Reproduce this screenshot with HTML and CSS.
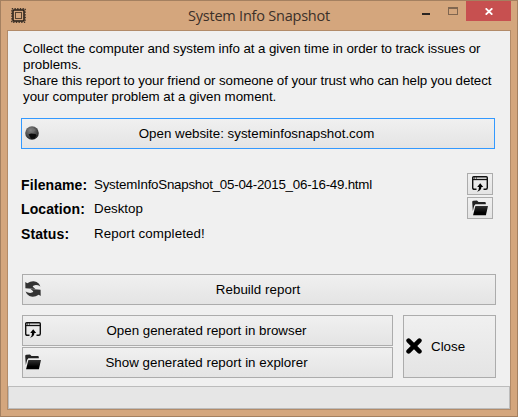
FILE: index.html
```html
<!DOCTYPE html>
<html lang="en">
<head>
<meta charset="utf-8">
<title>System Info Snapshot</title>
<link rel="stylesheet" href="styles.css">
</head>
<body>
<svg class="defs" width="0" height="0">
  <defs>
    <linearGradient id="ink" x1="0" y1="0" x2="0" y2="1"><stop offset="0" stop-color="#333"/><stop offset=".7" stop-color="#000"/></linearGradient>
    <radialGradient id="ball" cx=".4" cy=".3" r=".7"><stop offset="0" stop-color="#858585"/><stop offset=".6" stop-color="#505050"/><stop offset="1" stop-color="#242424"/></radialGradient>
    <symbol id="browser" viewBox="0 0 16 16">
      <path d="M4.5 13.3H2.2Q.7 13.3.7 11.8V1.7Q.7.7 1.7.7h12.6q1 0 1 1v10.1q0 1.5-1.5 1.5h-2.3" fill="none" stroke="#111" stroke-width="1.4"/>
      <path d="M1 3.5h14" stroke="#111" stroke-width="1.3"/>
      <path d="M2 2h1M4 2h1" stroke="#111" stroke-width="1"/>
      <path d="M8.2 7.2 11.2 11H9.4Q9.3 14.8 5 15.8 7.2 14 7 11H5.2z" fill="#000"/>
    </symbol>
    <symbol id="folder" viewBox="0 0 16 16">
      <path d="M.2 2Q.3.8 1.4.7L5 .5 6.5 2.1h6.3q1 0 1 1v1.1H3.4L2.2 5.8.8 11z" fill="#222"/>
      <path d="M3.4 5.9H16L13.9 15.3H1.1z" fill="url(#ink)"/>
    </symbol>
    <path id="swoosh" d="M.3.9 2.3 2.2Q7-.9 11.6.9 14.4 2.2 15.4 5.4 12.6 3.8 9.8 4.2 7.6 4.6 7.8 5.7L10.4 8 .4 7.2z" fill="#333"/>
  </defs>
</svg>
<div class="window">
  <header class="titlebar">
    <svg class="chip" width="15" height="15" viewBox="0 0 15 15">
      <rect x=".8" y=".8" width="13.4" height="13.4" fill="none" stroke="#40342a" stroke-width="1.4" stroke-dasharray="1.35 1.33"/>
      <rect x="2" y="2" width="11" height="11" rx="1" fill="none" stroke="#211b16" stroke-width="1.5"/>
      <rect x="4.5" y="4.5" width="6" height="6" fill="none" stroke="#54412f"/>
    </svg>
    <h1 class="title">System Info Snapshot</h1>
    <div class="controls">
      <svg class="min" width="8" height="2"><path d="M0 1h8" stroke="#2a2522" stroke-width="2"/></svg>
      <svg class="max" width="10" height="8"><rect x=".5" y="1" width="9" height="6.5" fill="none" stroke="#806650"/><path d="M0 1h10" stroke="#806650" stroke-width="2"/></svg>
      <div class="x"><svg width="8" height="7" viewBox="0 0 8 7"><path d="M.7.3 7.3 6.7M7.3.3.7 6.7" stroke="#fff" stroke-width="1.8"/></svg></div>
    </div>
  </header>
  <main class="client">
    <div class="intro">
      <p class="l1">Collect the computer and system info at a given time in order to track issues or</p>
      <p>problems.</p>
      <p class="l3">Share this report to your friend or someone of your trust who can help you detect</p>
      <p class="l4">your computer problem at a given moment.</p>
    </div>
    <button class="btn website"><svg width="14" height="14" viewBox="0 0 14 14"><circle cx="7" cy="7" r="6.8" fill="url(#ball)"/><path d="M3.5 8.6 6 7.6l4.5.4 1 1.5-2.2 3.2H6L4.5 10z" fill="#0c0c0c"/><path d="M7 1.5 11 4 7.5 6.5" fill="#777" opacity=".6"/></svg><span>Open website: systeminfosnapshot.com</span></button>
    <section class="info">
      <dl class="facts">
        <dt>Filename:</dt><dd class="v1">SystemInfoSnapshot_05-04-2015_06-16-49.html</dd>
        <dt>Location:</dt><dd>Desktop</dd>
        <dt>Status:</dt><dd class="v3">Report completed!</dd>
      </dl>
      <div class="tools">
        <button class="btn tool"><svg width="16" height="16"><use href="#browser"/></svg></button>
        <button class="btn tool"><svg width="16" height="16"><use href="#folder"/></svg></button>
      </div>
    </section>
    <button class="btn rebuild"><svg width="16" height="16" viewBox="0 0 16 16"><use href="#swoosh"/><use href="#swoosh" transform="rotate(180 8 8)"/></svg><span class="t-reb">Rebuild report</span></button>
    <section class="actions">
      <div class="stack">
        <button class="btn"><svg width="16" height="16"><use href="#browser"/></svg><span>Open generated report in browser</span></button>
        <button class="btn"><svg width="16" height="16"><use href="#folder"/></svg><span class="t-show">Show generated report in explorer</span></button>
      </div>
      <button class="btn close"><svg width="16" height="16" viewBox="0 0 16 16"><path d="M2.6 2.6 13.4 13.4M13.4 2.6 2.6 13.4" stroke="#000" stroke-width="4.6" stroke-linecap="round"/></svg><span class="t-close">Close</span></button>
    </section>
    <footer class="status"></footer>
  </main>
</div>
</body>
</html>
```
FILE: styles.css
```css
* { box-sizing: border-box; margin: 0; padding: 0; }
body { width: 518px; height: 417px; overflow: hidden; font: 13.33px/16px "Liberation Sans", Arial, sans-serif; color: #000; }
svg { display: block; flex: none; }
.defs { position: absolute; }
.window { width: 518px; height: 417px; border: 1px solid #a48060; background: #d4a67d; padding: 0 6px; }
.titlebar { height: 29px; display: grid; grid-template-columns: 130px 1fr 130px; }
.chip { margin: 7px 0 0 4px; }
.title { font: 14.5px/29px "Open Sans", "Noto Sans", sans-serif; color: #3b3029; text-align: center; white-space: nowrap; letter-spacing: -.22px; }
.controls { display: flex; justify-content: flex-end; }
.min { margin: 12px 18px 0 0; }
.max { margin: 6px 8px 0 0; }
.x { width: 45px; height: 20px; background: #c75050; display: flex; justify-content: center; padding: 7px 0 0 1px; }
.client { width: 504px; height: 380px; border: 1px solid #b28b69; background: #f0f0f0; display: flex; flex-direction: column; }
.intro { height: 87px; padding: 10px 0 0 15px; white-space: nowrap; flex: none; }
.l1 { letter-spacing: -.07px; }
.l3 { letter-spacing: -.09px; }
.l4 { letter-spacing: -.02px; }
.btn { height: 31px; border: 1px solid #acacac; background: linear-gradient(#f0f0f0, #e4e4e4); font: inherit; color: #000; display: flex; align-items: center; padding: 0 20px 0 2px; flex: none; white-space: nowrap; }
.btn svg { margin-bottom: 1px; }
.btn span { flex: 1; text-align: center; }
.btn .t-reb { letter-spacing: .05px; }
.btn .t-show { letter-spacing: .02px; }
.website { width: 474px; margin-left: 13px; border-color: #3399ff; padding-left: 3px; }
.info { height: 125px; display: flex; justify-content: space-between; padding: 24px 17px 0 13px; flex: none; }
.facts { display: grid; grid-template-columns: 73px auto; grid-template-rows: 24px 25px 24px; padding-top: 4px; align-content: start; white-space: nowrap; }
dt { font-weight: bold; font-size: 14px; letter-spacing: .1px; }
.v1 { letter-spacing: -.24px; }
.v3 { letter-spacing: .12px; }
.tools { display: grid; gap: 2px; align-content: start; }
.tool { width: 26px; height: 22px; padding: 0 0 0 4px; }
.rebuild { width: 474px; margin-left: 14px; }
.actions { display: flex; gap: 10px; margin: 10px 0 0 14px; height: 63px; flex: none; }
.stack { display: grid; gap: 1px; width: 371px; }
.close { width: 93px; height: 63px; }
.close .t-close { text-align: left; padding-left: 9px; }
.status { margin-top: auto; height: 23px; border: 1px solid #bcbcbc; background: #e6e6e6; flex: none; }
```
